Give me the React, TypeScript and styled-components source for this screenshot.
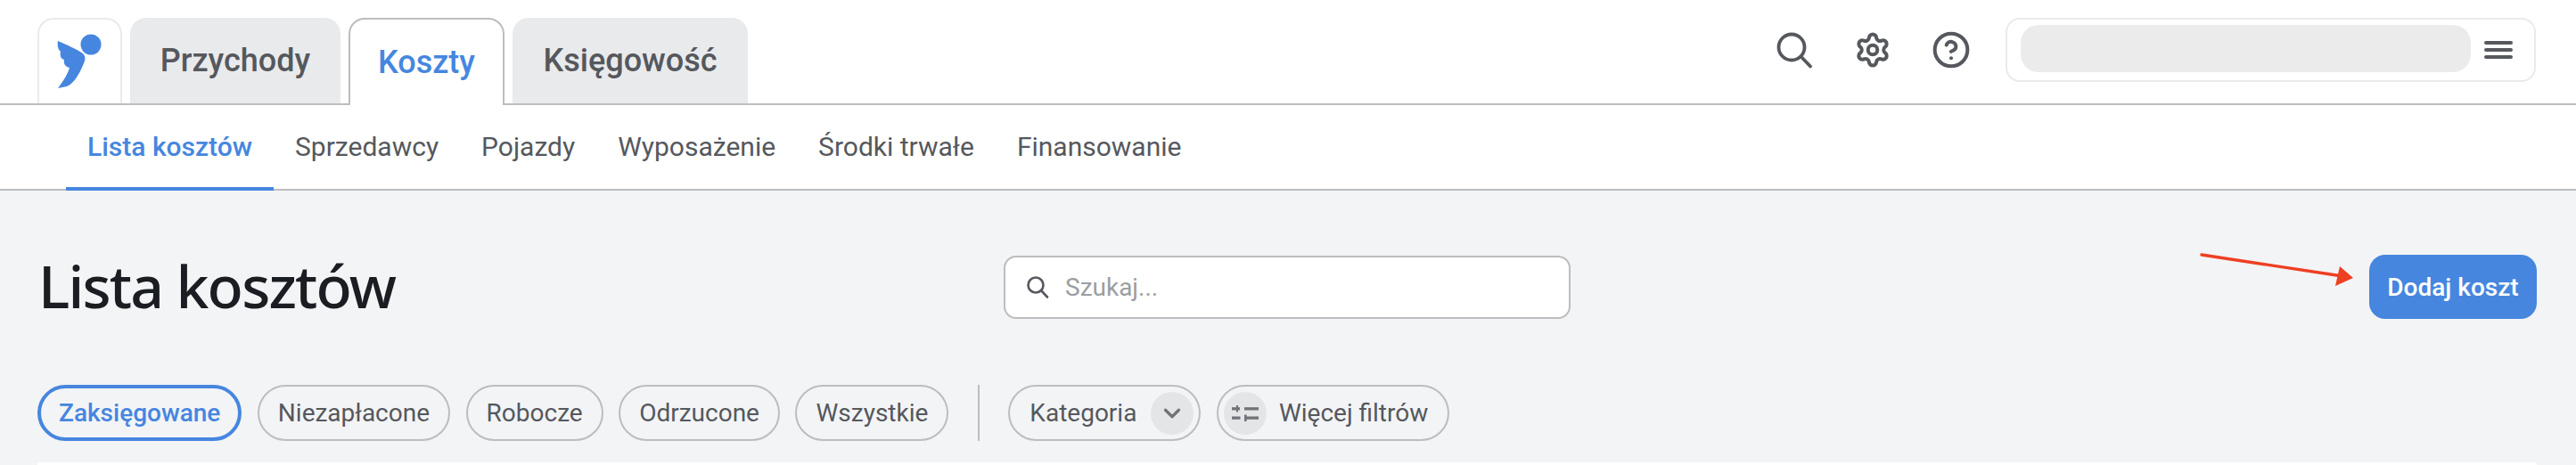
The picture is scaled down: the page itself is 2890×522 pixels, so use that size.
import { CircleHelp, ChevronDown, Settings } from 'lucide-react'
import styled, { createGlobalStyle } from 'styled-components'

const BLUE = '#4686df'
const TEXT = '#55585d'
const LINE = '#bcbdbf'

const mainTabs = [
  { label: 'Przychody', width: 236 },
  { label: 'Koszty', width: 175, active: true },
  { label: 'Księgowość', width: 264 },
]

const subTabs = [
  { label: 'Lista kosztów', active: true },
  { label: 'Sprzedawcy' },
  { label: 'Pojazdy' },
  { label: 'Wyposażenie' },
  { label: 'Środki trwałe' },
  { label: 'Finansowanie' },
]

const statusChips = [
  { label: 'Zaksięgowane', active: true },
  { label: 'Niezapłacone' },
  { label: 'Robocze' },
  { label: 'Odrzucone' },
  { label: 'Wszystkie' },
]

export default function App() {
  return (
    <>
      <GlobalStyle />
      <Page>
        <TopBar>
          <TabRow>
            <LogoTab>
              <svg width="56" height="66" viewBox="0 0 56 66" aria-hidden="true">
                <circle cx="44" cy="17" r="11.5" fill={BLUE} />
                <path
                  fill={BLUE}
                  d="M7 13 C16 17 28 22 35 27 C38 30 38 34 36 38 C32 48 26 60 17 64 L7 66 C13 58 18 50 20 43 C15 42 13 38 14 34 C10 33 9 29 10 25 C7 23 6 17 7 13 Z"
                />
              </svg>
            </LogoTab>
            {mainTabs.map((tab) => (
              <MainTab key={tab.label} $active={tab.active} $width={tab.width}>
                {tab.label}
              </MainTab>
            ))}
          </TabRow>
          <TopActions>
            <IconSlot $gap={46}>
              <svg width="42" height="42" viewBox="0 0 42 42" fill="none" aria-hidden="true">
                <circle cx="18" cy="18" r="14.5" stroke={TEXT} strokeWidth="3.8" />
                <path d="M28.5 28.5 L39 39.5" stroke={TEXT} strokeWidth="3.8" strokeLinecap="round" />
              </svg>
            </IconSlot>
            <IconSlot $gap={45}>
              <Settings size={42} color={TEXT} strokeWidth={2.3} />
            </IconSlot>
            <IconSlot $gap={39}>
              <CircleHelp size={44} color={TEXT} strokeWidth={2.2} />
            </IconSlot>
            <UserBox>
              <UserPill />
              <MenuLines>
                <MenuLine />
                <MenuLine />
                <MenuLine />
              </MenuLines>
            </UserBox>
          </TopActions>
        </TopBar>

        <SubNav>
          {subTabs.map((tab) => (
            <SubTab key={tab.label} $active={tab.active}>
              {tab.label}
            </SubTab>
          ))}
        </SubNav>

        <Content>
          <TitleRow>
            <Title>Lista kosztów</Title>
            <SearchBox>
              <svg width="26" height="26" viewBox="0 0 26 26" fill="none" aria-hidden="true">
                <circle cx="11" cy="11" r="8.5" stroke={TEXT} strokeWidth="2.6" />
                <path d="M17 17 L24 24.5" stroke={TEXT} strokeWidth="2.6" strokeLinecap="round" />
              </svg>
              <SearchInput placeholder="Szukaj..." readOnly />
            </SearchBox>
            <ActionSlot>
              <AddButton>
                <Annotation width="190" height="50" viewBox="0 0 190 50" aria-hidden="true">
                  <path d="M2 5 L160 29" stroke="#ee3f22" strokeWidth="3.4" strokeLinecap="round" />
                  <path d="M157 18 L172 31 L152 40 Z" fill="#ee3f22" />
                </Annotation>
                Dodaj koszt
              </AddButton>
            </ActionSlot>
          </TitleRow>

          <FilterRow>
            {statusChips.map((chip) => (
              <Chip key={chip.label} $active={chip.active}>
                {chip.label}
              </Chip>
            ))}
            <Divider />
            <SelectChip>
              Kategoria
              <ChipIcon>
                <ChevronDown size={30} color="#707378" strokeWidth={2.6} />
              </ChipIcon>
            </SelectChip>
            <MoreChip>
              <ChipIcon>
                <svg width="30" height="26" viewBox="0 0 30 26" aria-hidden="true" fill="#707378">
                  <rect x="0" y="6.2" width="9" height="3.3" />
                  <rect x="5" y="4" width="2" height="7.5" />
                  <rect x="14" y="6.2" width="16" height="3.3" />
                  <rect x="0" y="16.5" width="9.5" height="3.3" />
                  <rect x="14" y="14.5" width="2.6" height="7.5" />
                  <rect x="14" y="16.5" width="16" height="3.3" />
                </svg>
              </ChipIcon>
              Więcej filtrów
            </MoreChip>
          </FilterRow>

          <TableTop />
        </Content>
      </Page>
    </>
  )
}

const GlobalStyle = createGlobalStyle`
  html,
  body {
    margin: 0;
    background: #f3f4f6;
  }

  body {
    font-family: Roboto, "Liberation Sans", sans-serif;
    color: ${TEXT};
  }

  * {
    box-sizing: border-box;
  }
`

const Page = styled.div`
  width: 2890px;
  height: 522px;
  overflow: hidden;
  display: flex;
  flex-direction: column;
`

const TopBar = styled.header`
  height: 118px;
  flex: none;
  display: flex;
  align-items: flex-end;
  justify-content: space-between;
  padding: 0 45px 0 42px;
  background: #fff;
  border-bottom: 2px solid ${LINE};
`

const TabRow = styled.nav`
  display: flex;
  align-items: flex-end;
  gap: 9px;
  margin-bottom: -2px;
`

const LogoTab = styled.div`
  width: 95px;
  height: 96px;
  margin-bottom: 2px;
  padding: 11px 0 0 14px;
  background: #fff;
  border: 2px solid #e9eaec;
  border-bottom: none;
  border-radius: 18px 18px 0 0;
`

const MainTab = styled.div<{ $active?: boolean; $width: number }>`
  width: ${({ $width }) => $width}px;
  height: ${({ $active }) => ($active ? '98px' : '96px')};
  display: flex;
  align-items: center;
  justify-content: center;
  font-size: 36px;
  font-weight: 500;
  color: ${({ $active }) => ($active ? BLUE : TEXT)};
  background: ${({ $active }) => ($active ? '#fff' : '#e9eaec')};
  border: ${({ $active }) => ($active ? `2px solid ${LINE}` : 'none')};
  border-bottom: none;
  border-radius: 18px 18px 0 0;
  margin-bottom: ${({ $active }) => ($active ? '0' : '2px')};
`

const TopActions = styled.div`
  align-self: flex-start;
  display: flex;
  align-items: center;
  padding-top: 20px;
`

const IconSlot = styled.div<{ $gap: number }>`
  display: flex;
  margin-right: ${({ $gap }) => $gap}px;
`

const UserBox = styled.div`
  width: 595px;
  height: 72px;
  display: flex;
  align-items: center;
  padding-left: 15px;
  border: 2px solid #e9eaec;
  border-radius: 16px;
`

const UserPill = styled.div`
  width: 505px;
  height: 53px;
  margin-bottom: 3px;
  background: #ebebeb;
  border-radius: 20px;
`

const MenuLines = styled.div`
  display: grid;
  gap: 4px;
  margin-left: 15px;
`

const MenuLine = styled.span`
  display: block;
  width: 32px;
  height: 4px;
  background: ${TEXT};
  border-radius: 2px;
`

const SubNav = styled.nav`
  height: 96px;
  flex: none;
  display: flex;
  padding-left: 74px;
  background: #fff;
  border-bottom: 2px solid ${LINE};
`

const SubTab = styled.div<{ $active?: boolean }>`
  height: 96px;
  display: flex;
  align-items: center;
  padding: 0 24px;
  font-size: 30px;
  font-weight: ${({ $active }) => ($active ? 500 : 400)};
  color: ${({ $active }) => ($active ? BLUE : TEXT)};
  border-bottom: 4px solid ${({ $active }) => ($active ? BLUE : 'transparent')};
`

const Content = styled.main`
  flex: 1;
  min-height: 0;
  padding: 72px 44px 0 42px;
  background: #f3f4f6;
`

const TitleRow = styled.div`
  display: grid;
  grid-template-columns: 1fr 636px 1fr;
  align-items: center;
  height: 72px;
`

const Title = styled.h1`
  margin: 0 0 4px 1px;
  font-family: "Noto Sans", sans-serif;
  font-size: 66px;
  line-height: 68px;
  font-weight: 500;
  letter-spacing: -1.8px;
  color: #1a1d21;
  white-space: nowrap;
`

const SearchBox = styled.label`
  height: 71px;
  display: flex;
  align-items: center;
  gap: 18px;
  padding-left: 23px;
  background: #fff;
  border: 2px solid ${LINE};
  border-radius: 14px;
`

const SearchInput = styled.input`
  flex: 1;
  min-width: 0;
  padding: 0;
  border: none;
  outline: none;
  background: transparent;
  font: 400 28px Roboto, sans-serif;

  &::placeholder {
    color: #9b9ea2;
    opacity: 1;
  }
`

const ActionSlot = styled.div`
  display: flex;
  justify-content: flex-end;
`

const AddButton = styled.button`
  position: relative;
  width: 188px;
  height: 72px;
  padding: 0;
  border: none;
  border-radius: 18px;
  background: ${BLUE};
  color: #fff;
  font: 500 28px Roboto, sans-serif;
`

const Annotation = styled.svg`
  position: absolute;
  top: -5px;
  right: 100%;
`

const FilterRow = styled.div`
  display: flex;
  align-items: center;
  gap: 17.5px;
  margin-top: 74px;
`

const Chip = styled.div<{ $active?: boolean }>`
  height: 63px;
  display: flex;
  align-items: center;
  padding: 0 ${({ $active }) => ($active ? '20px' : '21px')};
  font-size: 28px;
  font-weight: ${({ $active }) => ($active ? 500 : 400)};
  color: ${({ $active }) => ($active ? BLUE : TEXT)};
  border: ${({ $active }) => ($active ? `4px solid ${BLUE}` : `2px solid ${LINE}`)};
  border-radius: 32px;
`

const Divider = styled.span`
  width: 2px;
  height: 63px;
  margin: 0 15px;
  background: ${LINE};
`

const SelectChip = styled(Chip)`
  gap: 16px;
  padding: 0 6px 0 22px;
`

const MoreChip = styled(Chip)`
  gap: 14px;
  padding: 0 22px 0 6px;
`

const ChipIcon = styled.span`
  width: 48px;
  height: 48px;
  display: flex;
  align-items: center;
  justify-content: center;
  border-radius: 50%;
  background: #e4e5e7;
`

const TableTop = styled.div`
  height: 10px;
  margin-top: 24px;
  background: #fff;
`
